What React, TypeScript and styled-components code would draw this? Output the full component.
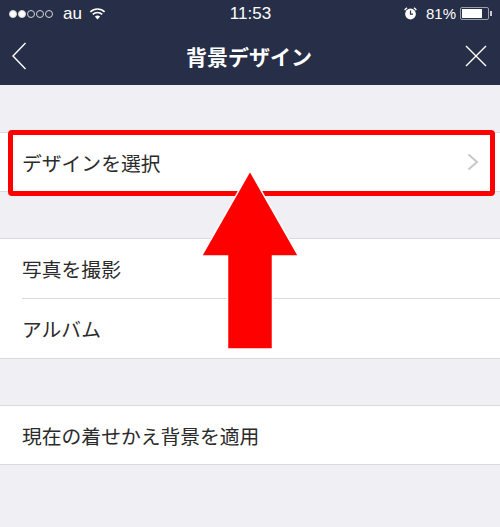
import React from 'react';
import styled, {createGlobalStyle} from 'styled-components';

const GlobalStyle = createGlobalStyle`
  html, body {
    margin: 0;
    padding: 0;
    background: #efeff4;
  }

  body {
    font-family: "Liberation Sans", "Noto Sans CJK JP", sans-serif;
  }
`;

type RowData = {label: string; arrow?: boolean; marked?: boolean};

const sections: RowData[][] = [
    [{label: 'デザインを選択', arrow: true, marked: true}],
    [{label: '写真を撮影'}, {label: 'アルバム'}],
    [{label: '現在の着せかえ背景を適用'}],
];

export default function App() {
    return (
        <Page>
            <GlobalStyle/>
            <Header>
                <StatusBar>
                    <StatusSide>
                        <Signal>
                            {[true, true, false, false, false].map((on, i) => <Dot key={i} $on={on}/>)}
                        </Signal>
                        <Carrier>au</Carrier>
                        <svg width="17" height="12" viewBox="0 0 17 12">
                            <path d="M8.5 11.5 L5.9 8.6 A3.8 3.8 0 0 1 11.1 8.6 Z" fill="#fff"/>
                            <path d="M3.8 6.4 A6.7 6.7 0 0 1 13.2 6.4" fill="none" stroke="#fff" strokeWidth="1.6"/>
                            <path d="M1.4 3.9 A10 10 0 0 1 15.6 3.9" fill="none" stroke="#fff" strokeWidth="1.6"/>
                        </svg>
                    </StatusSide>
                    <Clock>11:53</Clock>
                    <StatusRight>
                        <svg width="13" height="13" viewBox="0 0 13 13">
                            <circle cx="6.5" cy="7" r="5.4" fill="#fff"/>
                            <path d="M6.5 3.6 V7.2 H9" fill="none" stroke="#262f47" strokeWidth="1.2"/>
                            <path d="M0.6 3 L3 0.8 M12.4 3 L10 0.8" stroke="#fff" strokeWidth="1.4"/>
                        </svg>
                        <Percent>81%</Percent>
                        <Battery>
                            <BatteryFill/>
                        </Battery>
                    </StatusRight>
                </StatusBar>
                <NavBar>
                    <svg width="16" height="28" viewBox="0 0 16 28">
                        <path d="M14.5 1 L2 14 L14.5 27" fill="none" stroke="#fff" strokeWidth="1.4"/>
                    </svg>
                    <Title>背景デザイン</Title>
                    <CloseIcon width="22" height="22" viewBox="0 0 22 22">
                        <path d="M1 1 L21 21 M21 1 L1 21" fill="none" stroke="#fff" strokeWidth="1.4"/>
                    </CloseIcon>
                </NavBar>
            </Header>
            <Content>
                {sections.map((rows, i) => (
                    <Section key={i}>
                        {rows.map((row) => (
                            <Row key={row.label}>
                                <RowLabel>{row.label}</RowLabel>
                                {row.arrow && (
                                    <svg width="12" height="18" viewBox="0 0 12 18">
                                        <path d="M1.5 1.5 L10 9 L1.5 16.5" fill="none" stroke="#c7c7cc" strokeWidth="2"/>
                                    </svg>
                                )}
                                {row.marked && <RedFrame/>}
                            </Row>
                        ))}
                    </Section>
                ))}
            </Content>
            <BigArrow viewBox="0 0 100 184" width="100" height="184">
                <path
                    d="M50 2 L98.5 87 L72.5 87 L72.5 180 L27.5 180 L27.5 87 L1.5 87 Z"
                    fill="#ff0000"
                    stroke="#ffffff"
                    strokeWidth="1.5"
                />
            </BigArrow>
        </Page>
    );
}

const Page = styled.div`
  position: relative;
  width: 500px;
  height: 527px;
  overflow: hidden;
  background: #efeff4;
`;

const Header = styled.header`
  background: #262f47;
  color: #fff;
  height: 85px;
`;

const StatusBar = styled.div`
  display: grid;
  grid-template-columns: 1fr auto 1fr;
  align-items: center;
  height: 27px;
  padding: 0 8px 0 9px;
`;

const StatusSide = styled.div`
  display: flex;
  align-items: center;
`;

const Signal = styled.div`
  display: flex;
  gap: 1px;
  margin-right: 10px;
`;

const Dot = styled.span<{$on: boolean}>`
  box-sizing: border-box;
  width: 8px;
  height: 8px;
  border-radius: 50%;
  border: 1px solid #d5d7dc;
  background: ${(p) => (p.$on ? '#fff' : 'transparent')};
`;

const Carrier = styled.span`
  font-size: 17px;
  margin-right: 7px;
`;

const Clock = styled.span`
  font-size: 17px;
`;

const StatusRight = styled.div`
  display: flex;
  align-items: center;
  justify-content: flex-end;
  gap: 9px;
`;

const Percent = styled.span`
  font-size: 15px;
  margin-right: -5px;
`;

const Battery = styled.div`
  position: relative;
  box-sizing: border-box;
  width: 29px;
  height: 13px;
  margin-right: 3px;
  padding: 1px;
  border: 1px solid #9a9ea9;
  border-radius: 2px;

  &:after {
    content: '';
    position: absolute;
    right: -4px;
    top: 3px;
    width: 2px;
    height: 5px;
    background: #c8cad0;
  }
`;

const BatteryFill = styled.div`
  width: 80%;
  height: 100%;
  background: #fff;
`;

const NavBar = styled.div`
  display: grid;
  grid-template-columns: 1fr auto 1fr;
  align-items: center;
  height: 58px;
  padding: 0 13px 0 11px;
`;

const CloseIcon = styled.svg`
  justify-self: end;
`;

const Title = styled.h1`
  margin: 0;
  font-size: 21px;
  font-weight: 700;
`;

const Content = styled.main`
  display: flex;
  flex-direction: column;
  gap: 46px;
  padding: 47px 0 0 0;
`;

const Section = styled.section`
  background: #fff;
  border-top: 1px solid #d9d9de;
  border-bottom: 1px solid #d9d9de;
`;

const Row = styled.div`
  position: relative;
  display: flex;
  align-items: center;
  justify-content: space-between;
  height: 59px;
  padding: 0 21px 0 22px;

  &:only-child {
    height: 58px;
  }

  & + & {
    height: 60px;
  }

  & + &:before {
    content: '';
    position: absolute;
    left: 22px;
    right: 0;
    top: 0;
    height: 1px;
    background: #d9d9de;
  }
`;

const RowLabel = styled.span`
  font-size: 19.8px;
  color: #2b2b2b;
`;

const RedFrame = styled.div`
  position: absolute;
  left: 8px;
  top: -3px;
  box-sizing: border-box;
  width: 487px;
  height: 66px;
  border: 5px solid #ff0000;
  border-radius: 4px;
`;

const BigArrow = styled.svg`
  position: absolute;
  left: 200px;
  top: 169px;
`;
